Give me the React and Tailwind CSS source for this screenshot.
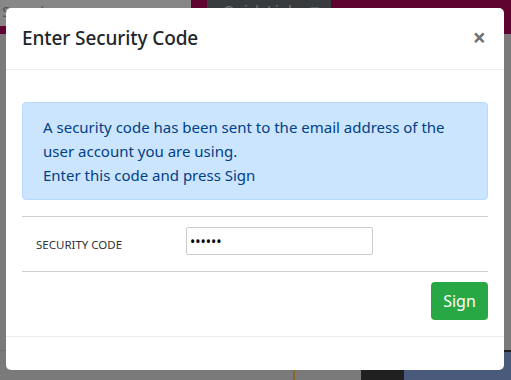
import React, { useState } from 'react'

const font = { fontFamily: '"Noto Sans", "Open Sans", sans-serif' }

const SecurityModal = () => {
  const [code, setCode] = useState('123456')

  return (
    <div className="absolute left-[6px] top-[8px] w-[498px] h-[362px] bg-white rounded-[5px] flex flex-col">
      <div className="h-[62px] px-[16px] flex items-center justify-between border-b border-[#e9ecef]">
        <h5 className="text-[19px] font-medium text-[#212529] leading-none tracking-[-0.1px]">Enter Security Code</h5>
        <button className="text-[23px] font-bold text-[#707070] leading-none mr-[2px] -mt-[3px]">×</button>
      </div>
      <div className="px-[16px] pt-[32px] pb-[16px]">
        <div className="bg-[#cce5ff] border border-[#b8daff] rounded-[4px] px-[20px] py-[12px] text-[#004085] text-[15px] leading-[24px]">
          A security code has been sent to the email address of the user account you are using.
          <br />
          Enter this code and press Sign
        </div>
        <div className="mt-[16px] border-t border-[#cfcfcf] h-[56px] flex items-center border-b">
          <label className="w-[164px] pl-[14px] text-[11.5px] text-[#333] uppercase mt-[2px]">Security Code</label>
          <input
            type="password"
            value={code}
            onChange={(e) => setCode(e.target.value)}
            className="w-[187px] h-[28px] -mt-[6px] border border-[#cccccc] rounded-[2px] px-[3px] text-[14px] outline-none"
          />
        </div>
        <div className="flex justify-end mt-[10px]">
          <button className="w-[57px] h-[38px] bg-[#28a745] text-white text-[16px] rounded-[4px]">Sign</button>
        </div>
      </div>
      <div className="border-t border-[#e9ecef] flex-1" />
    </div>
  )
}

const App = () => {
  return (
    <div className="relative w-[511px] h-[380px] overflow-hidden bg-[#7a7a7a]" style={font}>
      <div className="h-[34px] bg-[#5f0331] flex items-start">
        <div className="w-[191px] h-[26px] bg-[#878787] text-[#555] text-[15px] pl-[2px] leading-[22px]">Search</div>
        <div className="ml-[16px] w-[124px] h-[30px] bg-[#383c3f] text-[#777] text-[15px] pl-[16px] leading-[20px]">
          Quick Links ▼
        </div>
      </div>
      <div className="flex h-[346px]">
        <div className="flex-1 flex flex-col justify-end">
          <div className="h-[30px] border-t border-[#6e6e6e] flex">
            <div className="w-[294px] border-r border-[#6a6a6a]" />
            <div className="w-[34px] border-l border-[#8a6a2a]" />
          </div>
        </div>
        <div className="w-[150px] flex flex-col justify-end">
          <div className="h-[30px] bg-[#202020] flex justify-end">
            <div className="w-[107px] mt-[2px] bg-[#4a5a7a]" />
          </div>
        </div>
      </div>
      <SecurityModal />
    </div>
  )
}

export default App
